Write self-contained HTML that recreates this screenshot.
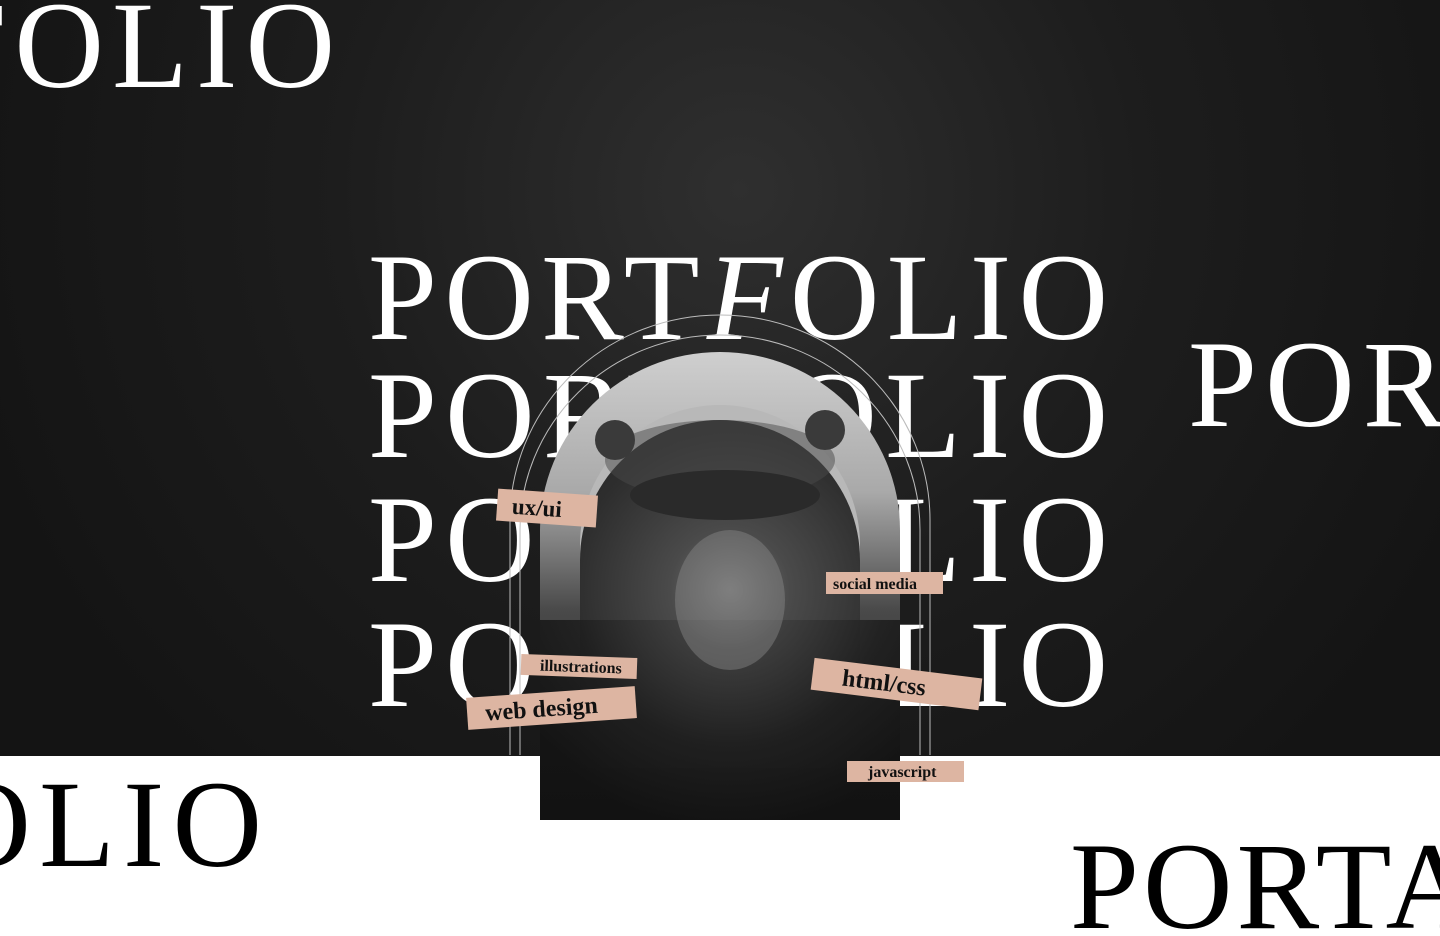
<!DOCTYPE html>
<html><head><meta charset="utf-8"><style>
html,body{margin:0;padding:0;width:1440px;height:936px;overflow:hidden;background:#fff}
svg{display:block}
</style></head><body>
<svg width="1440" height="936" viewBox="0 0 1440 936" xmlns="http://www.w3.org/2000/svg" font-family="'Liberation Serif', serif">
<defs>
<radialGradient id="bg" cx="740" cy="190" r="800" gradientUnits="userSpaceOnUse">
<stop offset="0" stop-color="#2f2f2f"/><stop offset="0.5" stop-color="#1d1d1d"/><stop offset="1" stop-color="#141414"/>
</radialGradient>
<linearGradient id="back" x1="0" y1="0" x2="0" y2="1">
<stop offset="0" stop-color="#cfcfcf"/><stop offset="0.3" stop-color="#a9a9a9"/><stop offset="0.55" stop-color="#4a4a4a"/><stop offset="1" stop-color="#121212"/>
</linearGradient>
<radialGradient id="face" cx="730" cy="590" r="240" gradientUnits="userSpaceOnUse">
<stop offset="0" stop-color="#6e6e6e"/><stop offset="0.25" stop-color="#3e3e3e"/><stop offset="0.65" stop-color="#1e1e1e"/><stop offset="1" stop-color="#121212"/>
</radialGradient>
</defs>
<rect width="1440" height="756" fill="url(#bg)"/>
<g fill="#fff" font-size="124">
<text x="-405" y="87" textLength="740" lengthAdjust="spacing">PORTFOLIO</text>
<text x="368" y="339" textLength="740" lengthAdjust="spacing">PORT<tspan font-style="italic">F</tspan>OLIO</text>
<text x="368" y="457" textLength="740" lengthAdjust="spacing">PORTFOLIO</text>
<text x="368" y="581" textLength="740" lengthAdjust="spacing">PORTFOLIO</text>
<text x="368" y="706" textLength="740" lengthAdjust="spacing">PORTFOLIO</text>
<text x="1188" y="426" textLength="740" lengthAdjust="spacing">PORTFOLIO</text>
</g>
<g fill="#000" font-size="124">
<text x="-478" y="866" textLength="740" lengthAdjust="spacing">PORTFOLIO</text>
<text x="1070" y="928" letter-spacing="4">PORTA</text>
</g>
<g fill="none" stroke="#bbb" stroke-width="1">
<path d="M510 755 V520 A210 205 0 0 1 930 520 V755"/>
<path d="M520 755 V530 A200 195 0 0 1 920 530 V755"/>
</g>
<path d="M540 820 V530 A180 178 0 0 1 900 530 V820 Z" fill="url(#back)"/>
<path d="M580 768 V545 A140 140 0 0 1 860 545 V768 Z" fill="#b8b8b8"/>
<path d="M580 560 A140 140 0 0 1 860 560 V768 H580 Z" fill="url(#face)" opacity="0.9"/>
<rect x="540" y="620" width="360" height="200" fill="url(#face)" opacity="0.9"/>
<ellipse cx="720" cy="460" rx="115" ry="40" fill="#4a4a4a" opacity="0.5"/>
<ellipse cx="725" cy="495" rx="95" ry="25" fill="#2a2a2a"/>
<ellipse cx="615" cy="440" rx="20" ry="20" fill="#3a3a3a"/>
<ellipse cx="825" cy="430" rx="20" ry="20" fill="#3a3a3a"/>
<ellipse cx="730" cy="600" rx="55" ry="70" fill="#8a8a8a" opacity="0.45"/>
<g fill="#111" font-weight="bold">
<g transform="rotate(4 546 508)"><rect x="497" y="492" width="100" height="32" fill="#ddb5a2"/><text x="512" y="516" font-size="23">ux/ui</text></g>
<rect x="826" y="572" width="117" height="22" fill="#ddb5a2"/><text x="833" y="589" font-size="16">social media</text>
<g transform="rotate(2 580 666)"><rect x="521" y="656" width="116" height="21" fill="#ddb5a2"/><text x="540" y="672" font-size="16">illustrations</text></g>
<g transform="rotate(-4 551 708)"><rect x="467" y="692" width="169" height="32" fill="#ddb5a2"/><text x="485" y="716" font-size="24">web design</text></g>
<g transform="rotate(7 896 684)"><rect x="812" y="668" width="169" height="32" fill="#ddb5a2"/><text x="842" y="692" font-size="24">html/css</text></g>
<rect x="847" y="761" width="117" height="21" fill="#ddb5a2"/><text x="868" y="777" font-size="16">javascript</text>
</g>
</svg>
</body></html>
